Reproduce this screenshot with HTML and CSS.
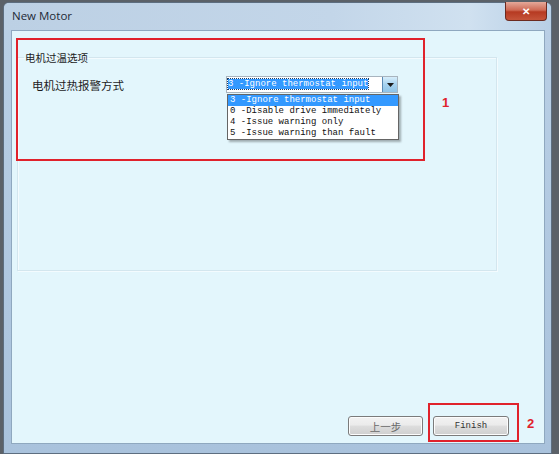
FILE: index.html
```html
<!DOCTYPE html>
<html lang="zh-CN">
<head>
  <meta charset="UTF-8">
  <title>New Motor</title>
  <link rel="stylesheet" href="styles.css">
</head>
<body>
  <div class="window">
    <div class="titlebar">
      <span class="title">New Motor</span>
      <span class="close">&#x2715;</span>
    </div>

    <main class="client">
      <fieldset class="group">
        <legend>电机过温选项</legend>
        <div class="row">
          <label class="label">电机过热报警方式</label>
          <div class="combo">
            <span class="combo-text"><span class="sel">3 -Ignore thermostat input</span></span>
            <span class="combo-btn"><svg width="7" height="4" viewBox="0 0 7 4"><path d="M0 0h7L3.5 4z" fill="#1b1b1b"/></svg></span>
            <ul class="dropdown">
              <li class="active">3 -Ignore thermostat input</li>
              <li>0 -Disable drive immediately</li>
              <li>4 -Issue warning only</li>
              <li>5 -Issue warning than fault</li>
            </ul>
          </div>
        </div>
      </fieldset>

      <div class="footer">
        <button class="btn prev">上一步</button>
        <button class="btn finish">Finish</button>
      </div>
    </main>

    <div class="mark mark-1"></div>
    <span class="num num-1">1</span>
    <div class="mark mark-2"></div>
    <span class="num num-2">2</span>
  </div>
</body>
</html>
```

FILE: styles.css
```css
* {
  margin: 0;
  padding: 0;
  box-sizing: border-box;
}

html, body {
  height: 100%;
}

body {
  background: #5b6168;
  padding: 2px 7px 0 3px;
  font-family: "Noto Sans", "Noto Sans CJK SC", sans-serif;
  overflow: hidden;
}

.window {
  position: relative;
  height: 452px;
  display: flex;
  flex-direction: column;
  border: 1px solid #5d6e80;
  border-radius: 6px 6px 0 0;
  background: linear-gradient(180deg, #c3d7ea 0, #b9cfe5 30px, #a9c2dc 100%);
}

.titlebar {
  height: 27px;
  display: flex;
  align-items: center;
  justify-content: space-between;
  padding: 0 4px 0 8px;
  background: linear-gradient(90deg, #bcd0e4 0, #c3d6e9 60%, #d0e1f0 85%, #b8cfe6 100%);
  border-radius: 5px 5px 0 0;
}

.title {
  font-family: "Open Sans", "Noto Sans", sans-serif;
  font-size: 11.5px;
  color: #1e2a36;
  margin-top: -3px;
}

.close {
  align-self: flex-start;
  width: 42px;
  height: 19px;
  margin-top: -1px;
  display: flex;
  align-items: center;
  justify-content: center;
  font-size: 10px;
  font-weight: 700;
  color: #fff;
  background: linear-gradient(180deg, #e5a99a 0, #cf6a55 45%, #b63a22 55%, #c5543a 100%);
  border: 1px solid #6b2a20;
  border-top: none;
  border-radius: 0 0 4px 4px;
}

.client {
  flex: 1;
  display: flex;
  flex-direction: column;
  margin: 0 6px 9px 7px;
  padding: 19px 47px 7px 5px;
  background: #e3f6fc;
  border: 1px solid #8fa8bf;
}

.group {
  height: 221px;
  border: 1px solid #d3e6ee;
  box-shadow: inset 1px 1px 0 #f3fbfe, 1px 1px 0 #f3fbfe;
  padding: 0;
}

.group legend {
  margin-left: 6px;
  padding: 0 1px;
  font-size: 10.5px;
  color: #1c1c1c;
}

.row {
  display: flex;
  align-items: center;
  margin-top: 11px;
  padding-left: 14px;
}

.label {
  width: 194px;
  font-size: 11.5px;
  color: #1c1c1c;
}

.combo {
  position: relative;
  width: 172px;
  height: 17px;
  display: flex;
  background: #fff;
  border: 1px solid #a8b4be;
}

.combo-text {
  flex: 1;
  padding: 1px 1px;
  font-family: "Liberation Mono", monospace;
  font-size: 9px;
  line-height: 13px;
}

.sel {
  background: #3399ff;
  color: #fff;
  outline: 1px dotted #1a3c66;
}

.combo-btn {
  width: 15px;
  display: flex;
  align-items: center;
  justify-content: center;
  background: linear-gradient(180deg, #d7eefb 0, #a6d2ef 50%, #8ec4e8 100%);
  border-left: 1px solid #5a89b3;
}

.dropdown {
  position: absolute;
  top: 17px;
  left: 0;
  width: 172px;
  list-style: none;
  background: #fff;
  border: 1px solid #656565;
  box-shadow: 2px 2px 2px rgba(0, 0, 0, 0.3);
  font-family: "Liberation Mono", monospace;
  font-size: 9px;
  line-height: 11px;
  color: #111;
}

.dropdown li {
  padding: 0 2px;
  white-space: nowrap;
}

.dropdown li.active {
  background: #3399ff;
  color: #fff;
}

.footer {
  margin-top: auto;
  display: flex;
  justify-content: flex-end;
  gap: 10px;
  margin-right: -12px;
}

.btn {
  width: 75px;
  height: 20px;
  border: 1px solid #7b7b7b;
  border-radius: 3px;
  background: linear-gradient(180deg, #f2f2f2 0, #ebebeb 45%, #dddddd 50%, #cfcfcf 100%);
  box-shadow: inset 0 0 0 1px #fcfcfc;
  color: #555;
}

.prev {
  font-family: "Noto Sans CJK SC", sans-serif;
  font-size: 10.5px;
  color: #6a6a6a;
}

.finish {
  width: 76px;
  font-family: "Liberation Mono", monospace;
  font-size: 9px;
  color: #333;
}

.mark {
  position: absolute;
  border: 2px solid #e0222b;
}

.mark-1 {
  left: 12px;
  top: 35px;
  width: 409px;
  height: 123px;
}

.mark-2 {
  left: 424px;
  top: 400px;
  width: 91px;
  height: 39px;
}

.num {
  position: absolute;
  font-family: "Liberation Sans", sans-serif;
  font-size: 13px;
  font-weight: 700;
  color: #e0222b;
}

.num-1 {
  left: 438px;
  top: 92px;
}

.num-2 {
  left: 523px;
  top: 413px;
}
```
